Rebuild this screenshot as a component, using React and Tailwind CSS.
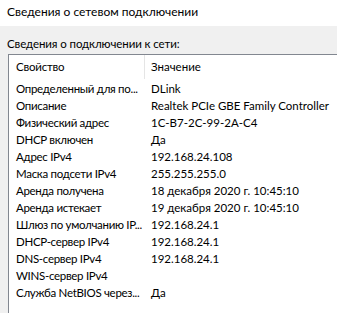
import React from 'react'

const rows = [
  ['Определенный для по...', 'DLink'],
  ['Описание', 'Realtek PCIe GBE Family Controller'],
  ['Физический адрес', '1C-B7-2C-99-2A-C4'],
  ['DHCP включен', 'Да'],
  ['Адрес IPv4', '192.168.24.108'],
  ['Маска подсети IPv4', '255.255.255.0'],
  ['Аренда получена', '18 декабря 2020 г. 10:45:10'],
  ['Аренда истекает', '19 декабря 2020 г. 10:45:10'],
  ['Шлюз по умолчанию IP...', '192.168.24.1'],
  ['DHCP-сервер IPv4', '192.168.24.1'],
  ['DNS-сервер IPv4', '192.168.24.1'],
  ['WINS-сервер IPv4', ''],
  ['Служба NetBIOS через...', 'Да'],
]

const App = () => {
  return (
    <div className="w-[337px] h-[313px] overflow-hidden bg-white text-black font-['Lato',sans-serif] text-[11.5px]">
      <div className="h-[26px] pl-[7px] pt-[4px] text-[12px] leading-[16px]">
        Сведения о сетевом подключении
      </div>
      <div className="bg-[#f0f0f0] h-[287px] pl-[8px]">
        <div className="h-[28px] pt-[10px] leading-[16px] -ml-[1px] tracking-[-0.1px]">
          Сведения о подключении к сети:
        </div>
        <div className="bg-white border-l border-t border-[#828790] h-[300px] w-[400px]">
          <div className="flex h-[24px] leading-[16px]">
            <div className="w-[135px] pl-[7px] pt-[4px] tracking-[-0.2px]">Свойство</div>
            <div className="border-l border-[#e5e5e5] pl-[6px] pt-[4px] h-[24px]">Значение</div>
          </div>
          <div className="pt-[1px]">
            {rows.map(([k, v], i) => (
              <div key={i} className="flex h-[17px] leading-[17px]">
                <div className="w-[135px] shrink-0 pl-[7px] whitespace-nowrap tracking-[-0.3px]">{k}</div>
                <div className="pl-[7px] whitespace-nowrap">{v}</div>
              </div>
            ))}
          </div>
        </div>
      </div>
    </div>
  )
}

export default App
